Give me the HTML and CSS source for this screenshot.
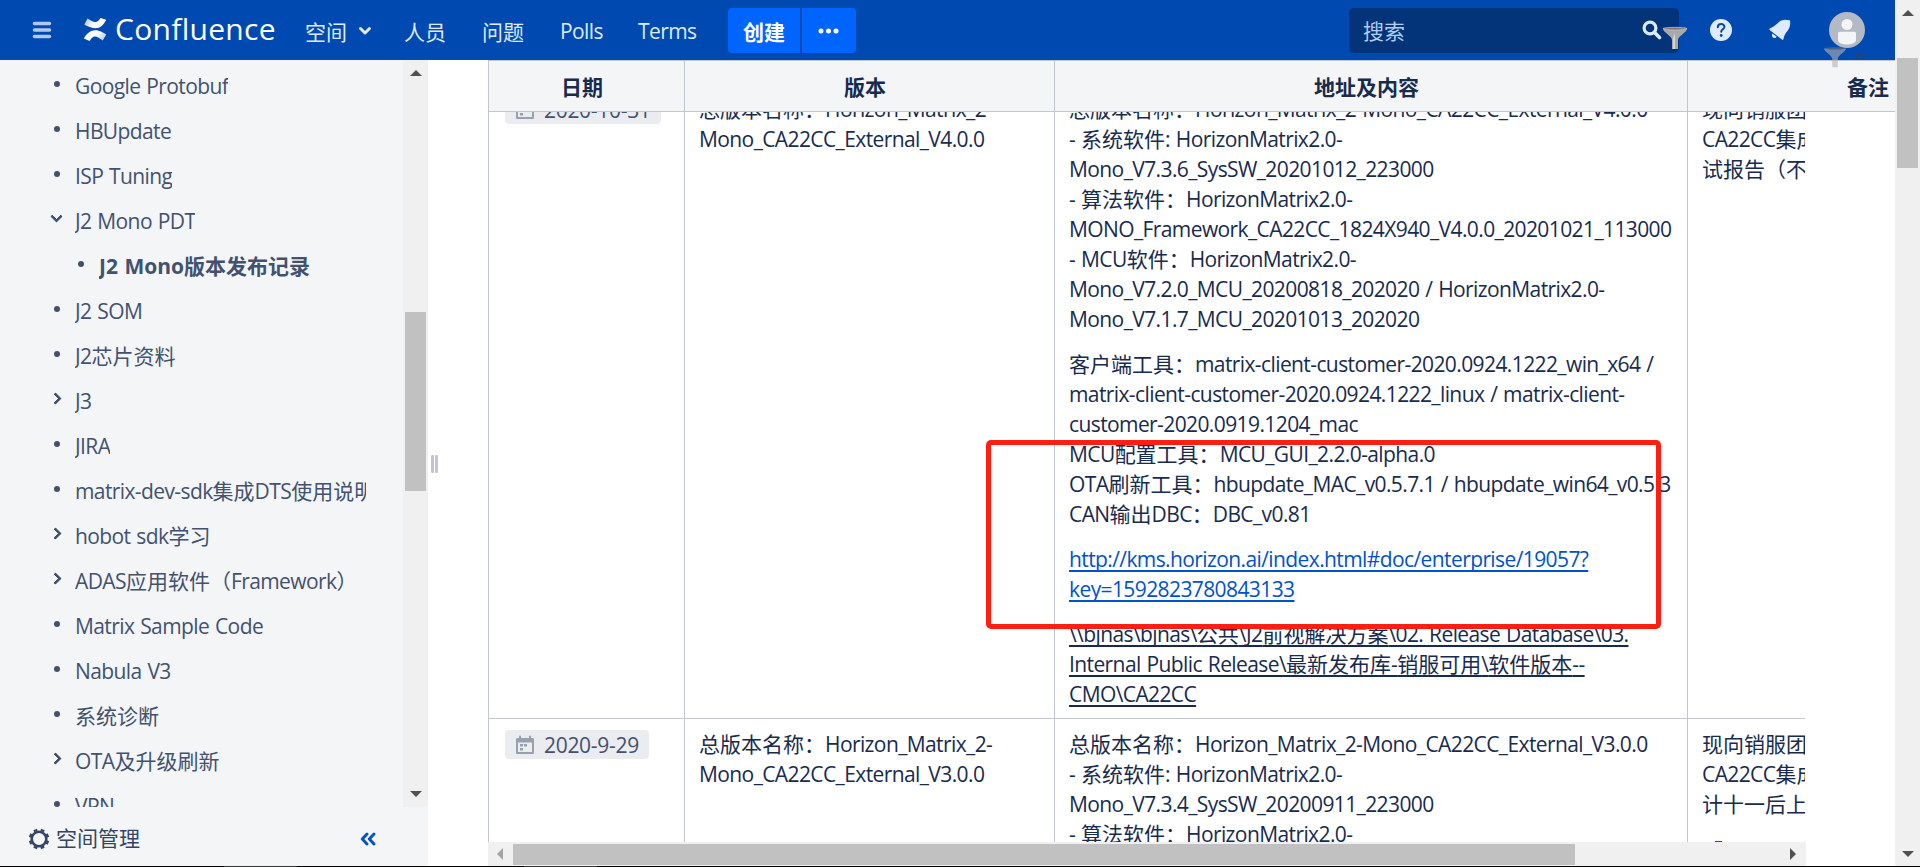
FILE: index.html
```
<!DOCTYPE html>
<html lang="zh">
  <head>
    <meta charset="UTF-8" />
    <meta name="viewport" content="width=device-width, initial-scale=1.0" />
    <title>J2 Mono版本发布记录 - Confluence</title>
    <link rel="stylesheet" href="styles.css">
  </head>
  <body>
    <div class="page">
      <header class="header">
        <svg class="menu-icon" width="20" height="18" viewBox="0 0 20 18">
          <path d="M2.500 2.500h15M2.500 9h15M2.500 15.500h15" stroke="#b0c9ee" stroke-width="3.600" stroke-linecap="round" />
        </svg>
        <div class="logo">
          <svg width="24" height="24" viewBox="0 0 24 24">
            <defs>
              <linearGradient id="up" x1="0" y1="0" x2="1" y2="0.300">
                <stop offset="0" stop-color="#a9c3ea" />
                <stop offset="0.600" stop-color="#fff" />
              </linearGradient>
              <linearGradient id="down" x1="1" y1="1" x2="0" y2="0.700">
                <stop offset="0" stop-color="#a9c3ea" />
                <stop offset="0.600" stop-color="#fff" />
              </linearGradient>
            </defs>
            <path fill="url(#up)" d="M4.500 1.500 1.300 7.500c2.500 1.400 6.500 3.700 11 3.700 4.800 0 8.300-3.500 11-8.500L17.500 1c-1.700 2.700-3 4-5.200 4C10 5 7.500 3.300 4.500 1.500z" />
            <path fill="url(#down)" d="M19.700 23.500 23.300 17.500c-2.500-1.400-6.500-4.200-11-4.200C7.500 13.300 3.700 16.500.800 21.500L6.700 24c1.700-2.900 3-4.500 5.200-4.500 2.300 0 4.800 2.200 7.800 4z" />
          </svg>
          <span class="logo-name">Confluence</span>
        </div>
        <nav class="nav">
          <a class="nav-drop"><span class="zh">空间</span>
            <svg width="14" height="10" viewBox="0 0 14 10"><path d="M2.500 2.500 7 7l4.500-4.500" fill="none" stroke="#deebff" stroke-width="3" stroke-linecap="round" stroke-linejoin="round" /></svg>
          </a>
          <a class="zh">人员</a>
          <a class="zh">问题</a>
          <a>Polls</a>
          <a>Terms</a>
        </nav>
        <div class="create">
          <button class="create-main">创建</button>
          <button class="create-more">
            <svg width="22" height="6" viewBox="0 0 22 6" fill="#fff"><circle cx="3" cy="3" r="2.500" /><circle cx="10.500" cy="3" r="2.500" /><circle cx="18" cy="3" r="2.500" /></svg>
          </button>
        </div>
        <div class="search">
          <span class="zh">搜索</span>
          <svg width="20" height="20" viewBox="0 0 20 20"><circle cx="8" cy="8" r="5.900" fill="none" stroke="#deebff" stroke-width="3.200" /><path d="m12.500 12.500 5 5" stroke="#deebff" stroke-width="3.600" stroke-linecap="round" /></svg>
          <svg class="funnel" width="26" height="26" viewBox="0 0 26 26">
            <path d="M1 3.500h24c0 4-9 7.500-9 11.500v9h-6v-9c0-4-9-7.500-9-11.500z" fill="#a9a9a9" />
            <path d="M1 3.500C3 2 23 2 25 3.500 23 5.500 3 5.500 1 3.500z" fill="#777" stroke="#c0c0c0" stroke-width="0.800" />
            <path d="M11 13v11h2V8z" fill="#d4d4d4" />
          </svg>
        </div>
        <svg class="help" width="22" height="22" viewBox="0 0 22 22">
          <circle cx="11" cy="11" r="11" fill="#deebff" />
          <path d="M7.800 8.200c.2-4.200 6.600-4 6.600-.3 0 2.300-3.200 2.500-3.200 4.900" fill="none" stroke="#0747a6" stroke-width="2" stroke-linecap="round" />
          <circle cx="11.200" cy="16.500" r="1.400" fill="#0747a6" />
        </svg>
        <svg class="bell" width="22" height="22" viewBox="0 0 22 22" fill="#deebff">
          <path d="M20.500 1.200c-5-1.200-8.500-.5-11 2.200C7 6 3.500 8 .800 9.600c-.8.600-.5 1.200.2 1.700l11.800 9.200c.8.600 1.500.3 1.700-.6.500-3 1.500-5 3.900-8 2.400-2.800 3.200-6.500 2.600-10.300z" />
          <path d="m3.500 14.500 4.200 3.300c-1 1.500-2.800 1.600-3.800.6-1-.9-1.300-2.500-.4-3.900z" />
        </svg>
        <div class="user">
          <svg width="36" height="36" viewBox="0 0 36 36">
            <circle cx="18" cy="18" r="18" fill="#b3bac5" />
            <circle cx="18" cy="12.500" r="5.500" fill="#f4f5f7" />
            <path d="M9 21.500c0-1 .7-1.800 1.800-1.800h14.400c1.100 0 1.800.8 1.800 1.800v6.500c0 6-18 6-18 0z" fill="#f4f5f7" />
          </svg>
          <svg class="user-funnel" width="24" height="24" viewBox="0 0 26 26">
            <path d="M1 3.500h24c0 4-9 7.500-9 11.500v9h-6v-9c0-4-9-7.500-9-11.500z" fill="#b4b4b4" />
            <path d="M1 3.500C3 2 23 2 25 3.500 23 5.500 3 5.500 1 3.500z" fill="#777" />
          </svg>
          <svg class="user-chevron" width="14" height="10" viewBox="0 0 14 10"><path d="M2.500 2.500 7 7l4.500-4.500" fill="none" stroke="#344563" stroke-width="3" /></svg>
        </div>
      </header>

      <div class="main">
        <aside class="sidebar">
          <div class="tree-wrap">
            <ul class="tree">
              <li><i class="dot"></i><span>Google Protobuf</span></li>
              <li><i class="dot"></i><span>HBUpdate</span></li>
              <li><i class="dot"></i><span>ISP Tuning</span></li>
              <li><i class="open"></i><span>J2 Mono PDT</span></li>
              <li class="current"><i class="dot"></i><span>J2 Mono<b class="zh">版本发布记录</b></span></li>
              <li><i class="dot"></i><span>J2 SOM</span></li>
              <li><i class="dot"></i><span>J2<b class="zh">芯片资料</b></span></li>
              <li><i class="closed"></i><span>J3</span></li>
              <li><i class="dot"></i><span>JIRA</span></li>
              <li><i class="dot"></i><span>matrix-dev-sdk<b class="zh">集成</b>DTS<b class="zh">使用说明</b></span></li>
              <li><i class="closed"></i><span>hobot sdk<b class="zh">学习</b></span></li>
              <li><i class="closed"></i><span>ADAS<b class="zh">应用软件（</b>Framework<b class="zh">）</b></span></li>
              <li><i class="dot"></i><span>Matrix Sample Code</span></li>
              <li><i class="dot"></i><span>Nabula V3</span></li>
              <li><i class="dot"></i><span><b class="zh">系统诊断</b></span></li>
              <li><i class="closed"></i><span>OTA<b class="zh">及升级刷新</b></span></li>
              <li><i class="dot"></i><span>VPN</span></li>
            </ul>
            <div class="vscroll">
              <i class="arrow-up"></i>
              <div class="side-thumb"></div>
              <i class="arrow-down"></i>
            </div>
          </div>
          <div class="sidebar-footer">
            <svg width="22" height="22" viewBox="0 0 22 22">
              <circle cx="11" cy="11" r="7.300" fill="none" stroke="#344563" stroke-width="2.600" />
              <path d="m7.900 3.500-.8-1.900M14.100 3.500l.8-1.900M7.900 18.500l-.8 1.900M14.100 18.500l.8 1.900M3.500 7.900l-1.900-.8M3.500 14.100l-1.900.8M18.500 7.900l1.900-.8M18.500 14.100l1.900.8" stroke="#344563" stroke-width="3.800" />
            </svg>
            <span class="zh">空间管理</span>
            <svg class="collapse" width="16" height="14" viewBox="0 0 16 14"><path d="M7 2 2.300 7 7 12M14 2 9.300 7l4.700 5" fill="none" stroke="#0052cc" stroke-width="2.900" stroke-linecap="round" stroke-linejoin="round" /></svg>
          </div>
        </aside>
        <div class="splitter"><i></i><i></i></div>

        <main class="content">
          <div class="table-head">
            <div>日期</div>
            <div>版本</div>
            <div>地址及内容</div>
            <div>备注</div>
          </div>
          <div class="table-view">
            <div class="row row-first">
              <div class="cell">
                <span class="date"><svg width="20" height="20" viewBox="0 0 20 20"><path fill="#97a0af" fill-rule="evenodd" d="M4 1.500a1 1 0 0 1 2 0V3h8V1.500a1 1 0 0 1 2 0V3h1.500c1 0 1.500.6 1.500 1.500v13c0 1-.6 1.500-1.500 1.500h-15C1.500 19 1 18.500 1 17.500v-13C1 3.600 1.500 3 2.500 3H4zM3 7.500V17h14V7.500z" /><path fill="#97a0af" d="M5 9h3v2.500H5zM9 9h3v2.500H9zM5 13h3v2.500H5z" /></svg>2020-10-31</span>
              </div>
              <div class="cell">
                <p><span class="zh">总版本名称：</span>Horizon_Matrix_2-<br>Mono_CA22CC_External_V4.0.0</p>
              </div>
              <div class="cell">
                <p>
                  <span class="zh">总版本名称：</span>Horizon_Matrix_2-Mono_CA22CC_External_V4.0.0<br>
                  - <span class="zh">系统软件</span>: HorizonMatrix2.0-<br>
                  Mono_V7.3.6_SysSW_20201012_223000<br>
                  - <span class="zh">算法软件：</span>HorizonMatrix2.0-<br>
                  MONO_Framework_CA22CC_1824X940_V4.0.0_20201021_113000<br>
                  - MCU<span class="zh">软件：</span>HorizonMatrix2.0-<br>
                  Mono_V7.2.0_MCU_20200818_202020 / HorizonMatrix2.0-<br>
                  Mono_V7.1.7_MCU_20201013_202020
                </p>
                <p>
                  <span class="zh">客户端工具：</span>matrix-client-customer-2020.0924.1222_win_x64 /<br>
                  matrix-client-customer-2020.0924.1222_linux / matrix-client-<br>
                  customer-2020.0919.1204_mac<br>
                  MCU<span class="zh">配置工具：</span>MCU_GUI_2.2.0-alpha.0<br>
                  OTA<span class="zh">刷新工具：</span>hbupdate_MAC_v0.5.7.1 / hbupdate_win64_v0.5.3<br>
                  CAN<span class="zh">输出</span>DBC<span class="zh">：</span>DBC_v0.81
                </p>
                <p><a class="link">http://kms.horizon.ai/index.html#doc/enterprise/19057?<br>key=1592823780843133</a></p>
                <p><u>\\bjnas\bjnas\<span class="zh">公共</span>\J2<span class="zh">前视解决方案</span>\02. Release Database\03.<br>Internal Public Release\<span class="zh">最新发布库</span>-<span class="zh">销服可用</span>\<span class="zh">软件版本</span>--<br>CMO\CA22CC</u></p>
                <div class="mark"></div>
              </div>
              <div class="cell">
                <p><span class="zh">现向销服团队</span><br>CA22CC<span class="zh">集成测</span><br><span class="zh">试报告（不含</span></p>
              </div>
            </div>
            <div class="row">
              <div class="cell">
                <span class="date"><svg width="20" height="20" viewBox="0 0 20 20"><path fill="#97a0af" fill-rule="evenodd" d="M4 1.500a1 1 0 0 1 2 0V3h8V1.500a1 1 0 0 1 2 0V3h1.500c1 0 1.500.6 1.500 1.500v13c0 1-.6 1.500-1.500 1.500h-15C1.500 19 1 18.500 1 17.500v-13C1 3.600 1.500 3 2.500 3H4zM3 7.500V17h14V7.500z" /><path fill="#97a0af" d="M5 9h3v2.500H5zM9 9h3v2.500H9zM5 13h3v2.500H5z" /></svg>2020-9-29</span>
              </div>
              <div class="cell">
                <p><span class="zh">总版本名称：</span>Horizon_Matrix_2-<br>Mono_CA22CC_External_V3.0.0</p>
              </div>
              <div class="cell">
                <p>
                  <span class="zh">总版本名称：</span>Horizon_Matrix_2-Mono_CA22CC_External_V3.0.0<br>
                  - <span class="zh">系统软件</span>: HorizonMatrix2.0-<br>
                  Mono_V7.3.4_SysSW_20200911_223000<br>
                  - <span class="zh">算法软件：</span>HorizonMatrix2.0-
                </p>
              </div>
              <div class="cell">
                <p><span class="zh">现向销服团队</span><br>CA22CC<span class="zh">集成测</span><br><span class="zh">计十一后上线</span></p>
                <i class="attachment"></i>
              </div>
            </div>
          </div>
          <div class="hscroll">
            <i class="arrow-left"></i>
            <div class="h-thumb"></div>
            <i class="arrow-right"></i>
          </div>
        </main>
      </div>
    </div>

    <div class="vscroll page-scroll">
      <i class="arrow-up"></i>
      <div class="page-thumb"></div>
      <i class="arrow-down"></i>
    </div>
    <div class="screen-edge"><i></i><i></i></div>
  </body>
</html>
```
FILE: styles.css
```
* {
  box-sizing: border-box;
}

body {
  margin: 0;
  height: 867px;
  overflow: hidden;
  display: grid;
  grid-template-columns: 1895px 25px;
  grid-template-rows: 866px 1px;
  font: 21px/30px "Open Sans", "Noto Sans CJK SC", sans-serif;
  letter-spacing: -0.6px;
  word-spacing: 1px;
  color: #172b4d;
  background: #fff;
  white-space: nowrap;
}

svg {
  display: block;
  flex: none;
}

.zh {
  font-family: "Noto Sans CJK SC", sans-serif;
  font-weight: inherit;
  letter-spacing: 0;
}

/* keep mixed lines on the 30px rhythm */
.cell .zh,
.tree .zh {
  line-height: 1;
}

.page {
  min-width: 0;
  display: flex;
  flex-direction: column;
  overflow: hidden;
}

/* header */
.header {
  height: 60px;
  flex: none;
  display: flex;
  align-items: center;
  padding-left: 32px;
  background: #0049b0;
  color: #deebff;
}

.logo {
  width: 221px;
  margin-left: 32px;
  display: flex;
  align-items: center;
}

.logo svg {
  margin: -2px 0 0 -1px;
}

.logo-name {
  margin: -2px 0 0 8px;
  font-size: 30px;
  letter-spacing: 0.3px;
  color: #fff;
}

.nav {
  display: grid;
  grid-template-columns: 99px 78px 78px 78px 90px;
  padding-top: 1px;
}

.nav-drop {
  display: flex;
  align-items: center;
  gap: 11px;
}

.create {
  display: flex;
  gap: 2px;
  margin-top: 1px;
}

.create button {
  height: 45px;
  border: 0;
  padding: 0;
  background: #0065ff;
  color: #fff;
  font: bold 21px "Noto Sans CJK SC", sans-serif;
}

.create-main {
  width: 72px;
  border-radius: 4px 0 0 4px;
}

.create-more {
  width: 54px;
  display: flex;
  align-items: center;
  justify-content: center;
  border-radius: 0 4px 4px 0;
}

.search {
  position: relative;
  width: 330px;
  height: 45px;
  margin: 1px 31px 0 493px;
  padding: 0 17px 2px 14px;
  display: flex;
  align-items: center;
  justify-content: space-between;
  border-radius: 5px;
  background: #03347a;
  color: #b3cdf2;
}

/* filter icon floats over the right end of the search field */
.funnel {
  position: absolute;
  right: -9px;
  top: 17px;
}

.bell {
  margin-left: 37px;
}

.user {
  position: relative;
  margin-left: 38px;
}

.user-funnel {
  position: absolute;
  left: -6px;
  top: 33px;
  opacity: 0.6;
}

.user-chevron {
  position: absolute;
  left: 24px;
  top: 39px;
  opacity: 0.55;
}

.main {
  flex: 1;
  min-height: 0;
  display: flex;
}

/* page tree */
.sidebar {
  width: 428px;
  flex: none;
  display: flex;
  flex-direction: column;
  background: #f4f5f7;
  color: #42526e;
}

.tree-wrap {
  height: 747px;
  display: flex;
}

.tree {
  width: 403px;
  margin: 0;
  padding: 3px 37px 0 50px;
  overflow: hidden;
  list-style: none;
}

.tree li {
  display: flex;
  align-items: center;
  height: 45px;
}

.tree li > span {
  overflow: hidden;
}

.tree .current {
  padding-left: 24px;
  font-weight: bold;
  letter-spacing: 0;
}

.dot,
.open,
.closed {
  flex: none;
  margin-bottom: 4px;
}

.dot {
  width: 6px;
  height: 6px;
  margin-left: 4px;
  margin-right: 15px;
  border-radius: 50%;
  background: #42526e;
}

.open,
.closed {
  width: 9px;
  height: 9px;
  border: solid #42526e;
  border-width: 0 3px 3px 0;
  border-radius: 1px;
}

.open {
  margin: 0 14px 9px 2px;
  transform: rotate(45deg);
}

.closed {
  margin: 0 15px 5px 1px;
  transform: rotate(-45deg);
}

.sidebar-footer {
  flex: 1;
  display: flex;
  align-items: center;
  padding: 4px 52px 0 28px;
  color: #344563;
}

.sidebar-footer .zh {
  margin: -3px 0 0 6px;
}

.collapse {
  margin-left: auto;
}

.splitter {
  width: 60px;
  padding: 395px 0 0 3px;
  display: flex;
  gap: 1px;
}

.splitter i {
  width: 3px;
  height: 18px;
  border-radius: 1px;
  background: #c1c7d0;
}

/* scrollbars */
.vscroll {
  width: 25px;
  flex: none;
  display: flex;
  flex-direction: column;
  align-items: center;
  background: #f0f0f0;
}

.tree-wrap .vscroll {
  padding: 10px 0;
}

.page-scroll {
  padding: 10px 0 9px;
}

.arrow-up,
.arrow-down {
  border: 6px solid transparent;
}

.arrow-up {
  border-top: 0;
  border-bottom-color: #505050;
}

.arrow-down {
  margin-top: auto;
  border-bottom: 0;
  border-top-color: #505050;
}

.side-thumb,
.page-thumb {
  width: 21px;
  background: #c1c1c1;
}

.side-thumb {
  height: 179px;
  margin-top: 236px;
}

.page-thumb {
  height: 110px;
  margin-top: 42px;
}

.hscroll {
  width: 1318px;
  height: 24px;
  padding: 0 10px 0 9px;
  display: flex;
  align-items: center;
  background: #f0f0f0;
}

.arrow-left,
.arrow-right {
  border: 6px solid transparent;
}

.arrow-left {
  border-left: 0;
  border-right-color: #a3a3a3;
}

.arrow-right {
  margin-left: auto;
  border-right: 0;
  border-left-color: #505050;
}

.h-thumb {
  width: 1062px;
  height: 21px;
  margin-left: 10px;
  background: #c1c1c1;
}

/* release table */
.content {
  flex: 1;
  min-width: 0;
}

.table-head,
.row {
  display: grid;
  grid-template-columns: 196px 370px 633px 370px;
  width: 1569px;
}

.table-head {
  height: 52px;
  border: solid #c1c7d0;
  border-width: 1px 0 1px 0;
  background: #f4f5f7;
  font: bold 21px/51px "Noto Sans CJK SC", sans-serif;
  letter-spacing: 0;
  text-align: center;
}

.table-head div {
  height: 50px;
  border-left: 1px solid #c1c7d0;
  padding-right: 9px;
}

.table-view {
  width: 1317px;
  height: 730px;
  overflow: hidden;
}

.row {
  border-bottom: 1px solid #c1c7d0;
}

/* scrolled a little under the sticky head */
.row-first {
  margin-top: -28px;
}

.cell {
  position: relative;
  padding: 10px 0 9px 14px;
  border-left: 1px solid #c1c7d0;
}

.cell p {
  margin: 0 0 15px;
}

.cell p:last-of-type {
  margin-bottom: 0;
}

.date {
  display: inline-flex;
  align-items: center;
  height: 29px;
  margin-left: 2px;
  margin-top: 1px;
  padding: 0 10px;
  gap: 9px;
  border-radius: 4px;
  background: #ebecf0;
  color: #42526e;
  letter-spacing: -0.3px;
}

.link {
  color: #0052cc;
}

.link,
.cell u {
  text-decoration: underline;
  text-decoration-thickness: 2px;
  text-underline-offset: 3px;
  text-decoration-skip-ink: none;
}

.mark {
  position: absolute;
  left: -69px;
  top: 356px;
  width: 675px;
  height: 189px;
  border: 5px solid #ff1f12;
  border-radius: 5px;
}

.attachment {
  display: block;
  width: 7px;
  height: 20px;
  margin: 22px 0 0 13px;
  background: #0052cc;
}

.screen-edge {
  grid-column: 1 / 3;
  display: flex;
  gap: 227px;
  padding-left: 224px;
  background: #000;
}

.screen-edge i {
  width: 73px;
  background: #333;
}
```
